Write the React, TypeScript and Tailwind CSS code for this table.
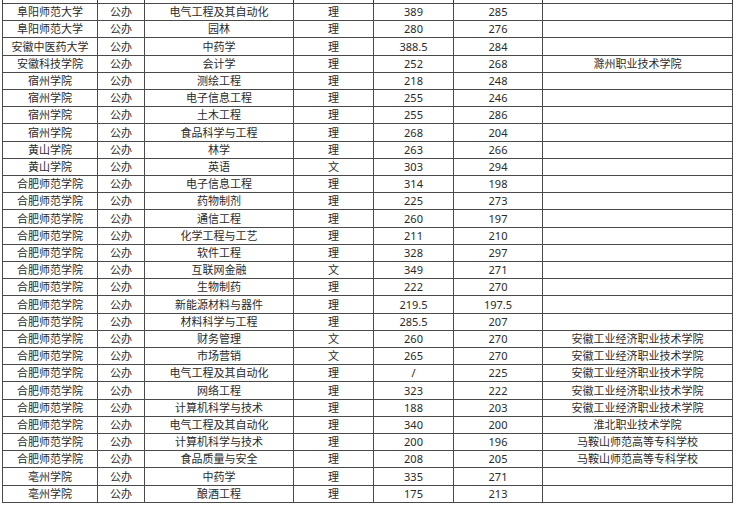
import React from "react";

type Row = [string, string, string, string, string, string, string];

const rows: Row[] = [
  ["阜阳师范大学", "公办", "电气工程及其自动化", "理", "389", "285", ""],
  ["阜阳师范大学", "公办", "园林", "理", "280", "276", ""],
  ["安徽中医药大学", "公办", "中药学", "理", "388.5", "284", ""],
  ["安徽科技学院", "公办", "会计学", "理", "252", "268", "滁州职业技术学院"],
  ["宿州学院", "公办", "测绘工程", "理", "218", "248", ""],
  ["宿州学院", "公办", "电子信息工程", "理", "255", "246", ""],
  ["宿州学院", "公办", "土木工程", "理", "255", "286", ""],
  ["宿州学院", "公办", "食品科学与工程", "理", "268", "204", ""],
  ["黄山学院", "公办", "林学", "理", "263", "266", ""],
  ["黄山学院", "公办", "英语", "文", "303", "294", ""],
  ["合肥师范学院", "公办", "电子信息工程", "理", "314", "198", ""],
  ["合肥师范学院", "公办", "药物制剂", "理", "225", "273", ""],
  ["合肥师范学院", "公办", "通信工程", "理", "260", "197", ""],
  ["合肥师范学院", "公办", "化学工程与工艺", "理", "211", "210", ""],
  ["合肥师范学院", "公办", "软件工程", "理", "328", "297", ""],
  ["合肥师范学院", "公办", "互联网金融", "文", "349", "271", ""],
  ["合肥师范学院", "公办", "生物制药", "理", "222", "270", ""],
  ["合肥师范学院", "公办", "新能源材料与器件", "理", "219.5", "197.5", ""],
  ["合肥师范学院", "公办", "材料科学与工程", "理", "285.5", "207", ""],
  ["合肥师范学院", "公办", "财务管理", "文", "260", "270", "安徽工业经济职业技术学院"],
  ["合肥师范学院", "公办", "市场营销", "文", "265", "270", "安徽工业经济职业技术学院"],
  ["合肥师范学院", "公办", "电气工程及其自动化", "理", "/", "225", "安徽工业经济职业技术学院"],
  ["合肥师范学院", "公办", "网络工程", "理", "323", "222", "安徽工业经济职业技术学院"],
  ["合肥师范学院", "公办", "计算机科学与技术", "理", "188", "203", "安徽工业经济职业技术学院"],
  ["合肥师范学院", "公办", "电气工程及其自动化", "理", "340", "200", "淮北职业技术学院"],
  ["合肥师范学院", "公办", "计算机科学与技术", "理", "200", "196", "马鞍山师范高等专科学校"],
  ["合肥师范学院", "公办", "食品质量与安全", "理", "208", "205", "马鞍山师范高等专科学校"],
  ["亳州学院", "公办", "中药学", "理", "335", "271", ""],
  ["亳州学院", "公办", "酿酒工程", "理", "175", "213", ""],
];

const widths = ["w-[95px]", "w-[47px]", "w-[149px]", "w-[80px]", "w-[80px]", "w-[89px]", "w-[190px]"];

export default function App() {
  return (
    <main
      className="w-[738px] h-[506px] bg-white overflow-hidden pl-[2px] text-[#2a2a2a]"
      style={{ fontFamily: '"Noto Sans", "Noto Sans CJK SC", sans-serif' }}
    >
      <table className="table-fixed border-collapse w-[731px] text-[11px] leading-none">
        <colgroup>
          {widths.map((w, i) => (
            <col key={i} className={w} />
          ))}
        </colgroup>
        <tbody>
          <tr className="h-[3px]">
            {widths.map((_, i) => (
              <td key={i} className="p-0 border-x border-[#3c3c3c]" />
            ))}
          </tr>
          {rows.map((r, ri) => (
            // every fifth row one pixel taller, so 29 rows fill 17.2px each on average
            <tr key={ri} className={ri % 5 === 2 ? "h-[18px]" : "h-[17px]"}>
              {r.map((c, ci) => (
                <td
                  key={ci}
                  className="p-0 text-center align-middle whitespace-nowrap border border-[#4a4a4a]"
                >
                  {c}
                </td>
              ))}
            </tr>
          ))}
        </tbody>
      </table>
    </main>
  );
}
